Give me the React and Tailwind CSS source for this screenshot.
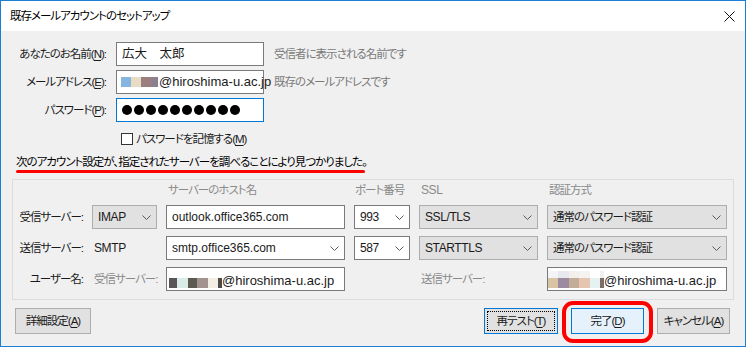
import React from 'react';
import clsx from 'clsx';

function Chevron() {
  return (
    <svg width="9" height="5" viewBox="0 0 9 5" className="shrink-0">
      <path d="M0.5 0.5 L4.5 4.5 L8.5 0.5" fill="none" stroke="#5a5a5a" strokeWidth="1" />
    </svg>
  );
}

function Select({ value, white, jp }) {
  return (
    <div
      className={clsx(
        'flex h-[24px] items-center justify-between whitespace-nowrap border px-[5px]',
        white ? 'border-[#7a7a7a] bg-white' : 'border-[#adadad] bg-[#e1e1e1]',
        !jp && 'text-[12px] tracking-[-0.4px]'
      )}
    >
      <span>{value}</span>
      <Chevron />
    </div>
  );
}

function Mosaic({ top, bottom }) {
  return (
    <div className="flex shrink-0 flex-col">
      {top && (
        <div className="flex h-[7px]">
          {top.map(([c, w], i) => (
            <div key={i} style={{ background: c, width: w }} />
          ))}
        </div>
      )}
      <div className="flex h-[10px]">
        {bottom.map(([c, w], i) => (
          <div key={i} style={{ background: c, width: w }} />
        ))}
      </div>
    </div>
  );
}

function Key({ children }) {
  return <span className="underline underline-offset-2">{children}</span>;
}

function Button({ children, focus, primary }) {
  return (
    <div
      className={clsx(
        'flex h-[26px] items-center justify-center whitespace-nowrap border',
        primary
          ? 'w-[73px] border-[#0078d7] bg-[#e5f1fb]'
          : focus
          ? 'w-[74px] border-[#0078d7] bg-[#e1e1e1] p-[2px]'
          : 'w-[73px] border-[#adadad] bg-[#e1e1e1]'
      )}
    >
      {focus ? (
        <div className="flex h-full w-full items-center justify-center border border-dotted border-black">
          {children}
        </div>
      ) : (
        children
      )}
    </div>
  );
}

export default function App() {
  return (
    <div className="flex h-[347px] w-[746px] flex-col overflow-hidden border border-[#1a7fd4] bg-[#f0f0f0] font-['Liberation_Sans','Noto_Sans_CJK_JP',sans-serif] text-[11.5px] leading-[16px] tracking-[-1px] text-[#1a1a1a] [font-feature-settings:'palt']">
      {/* title bar */}
      <div className="flex h-[30px] shrink-0 items-center justify-between bg-white pl-[9px] pr-[10px]">
        <span className="text-black">既存メールアカウントのセットアップ</span>
        <svg width="11" height="11" viewBox="0 0 11 11">
          <path d="M0.5 0.5 L10.5 10.5 M10.5 0.5 L0.5 10.5" stroke="#111" strokeWidth="1" />
        </svg>
      </div>

      <div className="flex flex-1 flex-col pt-[11px]">
        {/* account fields */}
        <div className="grid grid-cols-[105px_148px_auto] items-center gap-x-[10px] gap-y-[4px] whitespace-nowrap">
          <div className="text-right">
            あなたのお名前(<Key>N</Key>):
          </div>
          <div className="flex h-[24px] items-center border border-[#7a7a7a] bg-white px-[5px] text-[12.5px] tracking-[0px]">
            広大　太郎
          </div>
          <div className="text-[#7a7a7a]">受信者に表示される名前です</div>

          <div className="text-right">
            メールアドレス(<Key>E</Key>):
          </div>
          <div className="flex h-[24px] items-center border border-[#7a7a7a] bg-white px-[4px] text-[13px] tracking-normal">
            <Mosaic
              bottom={[
                ['#86b6df', 10],
                ['#e8dcc5', 10],
                ['#9b7f80', 11],
                ['#8b8093', 6],
              ]}
            />
            <span className="ml-[1px]">@hiroshima-u.ac.jp</span>
          </div>
          <div className="text-[#7a7a7a]">既存のメールアドレスです</div>

          <div className="text-right">
            パスワード(<Key>P</Key>):
          </div>
          <div className="flex h-[24px] items-center gap-[2px] border border-[#0078d7] bg-white px-[5px]">
            {Array.from({ length: 10 }).map((_, i) => (
              <div key={i} className="h-[10px] w-[10px] rounded-full bg-black" />
            ))}
          </div>
          <div />
        </div>

        <div className="mt-[8px] flex h-[17px] items-center whitespace-nowrap pl-[120px]">
          <div className="h-[12px] w-[12px] border border-[#333] bg-white" />
          <span className="ml-[3px]">
            パスワードを記憶する(<Key>M</Key>)
          </span>
        </div>

        {/* found message */}
        <div className="mt-[7px] pl-[15px]">
          <div className="h-[16px] whitespace-nowrap text-black">
            次のアカウント設定が、指定されたサーバーを調べることにより見つかりました。
          </div>
          <div className="h-[3px] w-[349px] rounded-full bg-[#ff0000]" />
        </div>

        {/* server group */}
        <div className="mx-[11px] mt-[6px] border border-[#dcdcdc] pb-[8px] pr-[6px] pt-[2px]">
          <div className="grid grid-cols-[70px_65px_179px_56px_119px_180px] items-center gap-x-[9px] gap-y-[7px] whitespace-nowrap">
            <div />
            <div />
            <div className="h-[16px] pl-[2px] text-[#8a8a8a]">サーバーのホスト名</div>
            <div className="pl-[1px] text-[#8a8a8a]">ポート番号</div>
            <div className="pl-[2px] text-[12px] tracking-[-0.4px] text-[#8a8a8a]">SSL</div>
            <div className="pl-[2px] text-[#8a8a8a]">認証方式</div>

            <div className="text-right">受信サーバー:</div>
            <Select value="IMAP" />
            <div className="flex h-[24px] items-center border border-[#7a7a7a] bg-white px-[5px] text-[12px] tracking-normal">
              outlook.office365.com
            </div>
            <Select value="993" white />
            <Select value="SSL/TLS" />
            <Select value="通常のパスワード認証" jp />

            <div className="text-right">送信サーバー:</div>
            <div className="pl-[2px] text-[12px] tracking-[-0.4px]">SMTP</div>
            <div className="flex h-[24px] items-center justify-between border border-[#7a7a7a] bg-white px-[5px] text-[12px] tracking-normal">
              <span>smtp.office365.com</span>
              <Chevron />
            </div>
            <Select value="587" white />
            <Select value="STARTTLS" />
            <Select value="通常のパスワード認証" jp />

            <div className="text-right">ユーザー名:</div>
            <div className="pl-[2px] text-[#8a8a8a]">受信サーバー:</div>
            <div className="flex h-[24px] items-end border border-[#7a7a7a] bg-white pb-[2px] pl-[2px] text-[13px] tracking-normal">
              <Mosaic
                bottom={[
                  ['#5a5557', 8],
                  ['#d9ece8', 11],
                  ['#5c5950', 9],
                  ['#a39390', 11],
                  ['#f2eee4', 10],
                  ['#4e4a48', 4],
                ]}
              />
              <span className="mb-[-1px]">@hiroshima-u.ac.jp</span>
            </div>
            <div />
            <div className="pl-[2px] text-[#8a8a8a]">送信サーバー:</div>
            <div className="flex h-[24px] items-end border border-[#7a7a7a] bg-white pb-[2px] text-[13px] tracking-normal">
              <Mosaic
                top={[
                  ['#f4f4f6', 10],
                  ['#e8e8ef', 11],
                  ['#f5efec', 10],
                  ['#f4f3f1', 11],
                  ['#ffffff', 10],
                  ['#f0f0f0', 4],
                ]}
                bottom={[
                  ['#d8c3a3', 10],
                  ['#9b8aa0', 11],
                  ['#c3ad96', 10],
                  ['#e6c5b0', 11],
                  ['#e5f2f2', 10],
                  ['#7b6e67', 4],
                ]}
              />
              <span className="mb-[-1px]">@hiroshima-u.ac.jp</span>
            </div>
          </div>
        </div>

        {/* buttons */}
        <div className="mt-[8px] flex items-center justify-between pl-[14px] pr-[15px]">
          <div className="flex h-[26px] w-[76px] items-center justify-center whitespace-nowrap border border-[#adadad] bg-[#e1e1e1]">
            詳細設定(<Key>A</Key>)
          </div>
          <div className="flex items-center gap-[13px]">
            <Button focus>
              再テスト(<Key>T</Key>)
            </Button>
            <div className="relative">
              <Button primary>
                完了(<Key>D</Key>)
              </Button>
              <div className="pointer-events-none absolute -bottom-[9px] -left-[9px] -right-[9px] -top-[7px] rounded-[11px] border-[4px] border-[#ff0000]" />
            </div>
            <Button>
              キャンセル(<Key>A</Key>)
            </Button>
          </div>
        </div>
      </div>
    </div>
  );
}
